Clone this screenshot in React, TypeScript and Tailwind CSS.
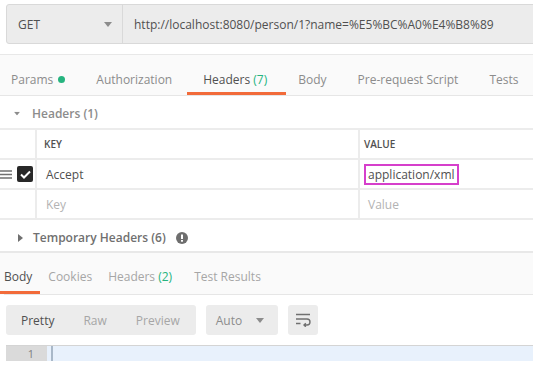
import React from 'react'

const Caret = ({ className }: { className?: string }) => (
  <svg className={className} width='8' height='5' viewBox='0 0 8 5'>
    <path d='M0 0 H8 L4 5 Z' fill='#8c8c8c' />
  </svg>
)

const App = () => {
  return (
    <div className="w-[533px] h-[367px] overflow-hidden bg-white font-['Open_Sans',sans-serif] text-[12px] leading-[17px] text-[#505050]">
      {/* request bar */}
      <div className='h-[55px] border-b border-[#e8e8e8] pl-[6px] pt-[4px]'>
        <div className='flex h-[40px] w-[560px] rounded-[3px] border border-[#d9d9d9] bg-[#ececec]'>
          <div className='flex w-[116px] items-center justify-between border-r border-[#d9d9d9] pl-[11px] pr-[10px]'>
            <span>GET</span>
            <Caret />
          </div>
          <div className='flex items-center pl-[11px]'>
            http://localhost:8080/person/1?name=%E5%BC%A0%E4%B8%89
          </div>
        </div>
      </div>

      {/* request tabs */}
      <div className='flex h-[41px] gap-[31px] border-b border-[#e6e6e6] bg-[#fafafa] pl-[11px] text-[#8c8c8c]'>
        <div className='flex items-start pt-[16px]'>
          Params
          <span className='ml-[5px] mt-[5px] size-[7px] rounded-full bg-[#26b47f]' />
        </div>
        <div className='pt-[16px]'>Authorization</div>
        <div className='relative pt-[16px] text-[#505050]'>
          Headers <span className='text-[#26b47f]'>(7)</span>
          <span className='absolute bottom-0 left-[-16px] right-[-19px] h-[3px] bg-[#f26b3a]' />
        </div>
        <div className='pt-[16px]'>Body</div>
        <div className='pt-[16px]'>Pre-request Script</div>
        <div className='pt-[16px]'>Tests</div>
      </div>

      {/* headers section */}
      <div className='flex h-[32px] items-center gap-[11px] pl-[13px] pt-[2px] font-semibold text-[#8c8c8c]'>
        <Caret className='scale-75' />
        <span>Headers (1)</span>
      </div>

      <div className='border-t-2 border-[#ececec]'>
        <div className='flex h-[30px] border-b-2 border-[#ececec] text-[10px] font-semibold text-[#505050]'>
          <div className='w-[37px] border-r-2 border-[#ececec]' />
          <div className='flex w-[323px] items-center border-r-2 border-[#ececec] pl-[7px]'>KEY</div>
          <div className='flex items-center pl-[4px]'>VALUE</div>
        </div>
        <div className='flex h-[30px] border-b-2 border-[#ececec]'>
          <div className='flex w-[37px] items-center gap-[5px] border-r-2 border-[#ececec]'>
            <svg width='12' height='9' viewBox='0 0 12 9'>
              <path d='M0 1 H12 M0 4.5 H12 M0 8 H12' stroke='#707070' strokeWidth='1.4' />
            </svg>
            <span className='flex size-[16px] items-center justify-center rounded-[2px] bg-[#282828]'>
              <svg width='11' height='9' viewBox='0 0 11 9'>
                <path d='M1 4.5 L4 7.5 L10 1.5' fill='none' stroke='white' strokeWidth='2' />
              </svg>
            </span>
          </div>
          <div className='flex w-[323px] items-center border-r-2 border-[#ececec] pl-[9px]'>Accept</div>
          <div className='flex items-center pl-[4px]'>
            <span className='flex h-[21px] items-center border-2 border-[#d63fcb] px-[2px]'>application/xml</span>
          </div>
        </div>
        <div className='flex h-[30px] border-b-2 border-[#ececec] text-[#b3b3b3]'>
          <div className='w-[37px] border-r-2 border-[#ececec]' />
          <div className='flex w-[323px] items-center border-r-2 border-[#ececec] pl-[9px]'>Key</div>
          <div className='flex items-center pl-[8px]'>Value</div>
        </div>
      </div>

      <div className='flex h-[31px] items-center pl-[18px] pt-[4px] font-semibold text-[#707070]'>
        <svg width='5' height='8' viewBox='0 0 5 8'>
          <path d='M0 0 L5 4 L0 8 Z' fill='#707070' />
        </svg>
        <span className='ml-[10px]'>Temporary Headers (6)</span>
        <svg className='ml-[10px]' width='12' height='12' viewBox='0 0 12 12'>
          <circle cx='6' cy='6' r='6' fill='#6e6e6e' />
          <rect x='5' y='2.5' width='2' height='4.5' fill='white' />
          <rect x='5' y='8' width='2' height='1.7' fill='white' />
        </svg>
      </div>

      {/* response tabs */}
      <div className='flex h-[44px] border-y-2 border-t-[#e8e8e8] border-b-0 bg-[#fafafa] pl-[4px] text-[#a6a6a6]'>
        <div className='flex w-full border-b border-[#e6e6e6]'>
          <div className='relative pt-[15px] text-[#505050]'>
            Body
            <span className='absolute bottom-0 left-[-4px] right-[-8px] h-[3px] bg-[#f26b3a]' />
          </div>
          <div className='ml-[16px] pt-[15px]'>Cookies</div>
          <div className='ml-[16px] pt-[15px]'>
            Headers <span className='text-[#26b47f]'>(2)</span>
          </div>
          <div className='ml-[22px] pt-[15px]'>Test Results</div>
        </div>
      </div>

      {/* response toolbar */}
      <div className='flex gap-[10px] pl-[6px] pt-[10px]'>
        <div className='flex h-[30px] items-center gap-[29px] rounded-[3px] bg-[#ececec] pl-[15px] pr-[16px] text-[#a6a6a6]'>
          <span className='text-[#505050]'>Pretty</span>
          <span>Raw</span>
          <span>Preview</span>
        </div>
        <div className='flex h-[30px] w-[72px] items-center justify-between rounded-[3px] bg-[#ececec] pl-[10px] pr-[14px] text-[#8c8c8c]'>
          <span>Auto</span>
          <Caret />
        </div>
        <div className='flex h-[30px] w-[30px] items-center justify-center rounded-[3px] bg-[#ececec]'>
          <svg width='16' height='14' viewBox='0 0 16 14'>
            <path
              d='M1 1.5 H15 M1 6 H12 A3 3 0 0 1 12 12 H9 M10.8 10.2 L9 12 L10.8 13.8 M1 10.5 H5.5'
              fill='none'
              stroke='#707070'
              strokeWidth='1.4'
            />
          </svg>
        </div>
      </div>

      {/* editor */}
      <div className='ml-[6px] mt-[10px] border-t border-[#d4d4d4]'>
        <div className='flex h-[15px]'>
          <div className='w-[41px] bg-[#dadada] pr-[13px] text-right text-[11px] leading-[15px] text-[#808080]'>1</div>
          <div className='flex flex-1 bg-[#e8f1fc]'>
            <span className='ml-[4px] h-full w-[2px] bg-[#a9b8c8]' />
          </div>
        </div>
      </div>
    </div>
  )
}

export default App
